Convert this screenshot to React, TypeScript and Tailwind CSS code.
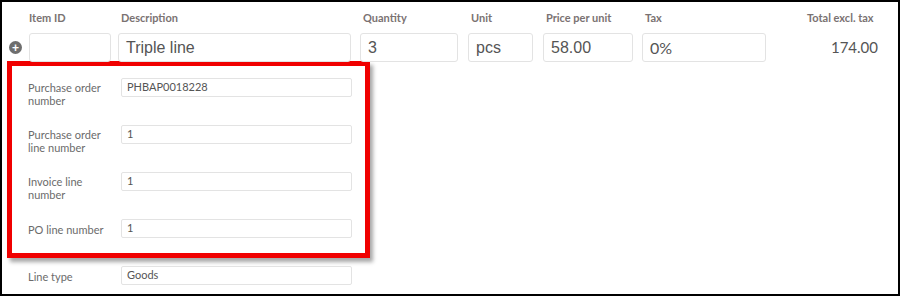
import React from "react"

const label = "text-[11px] leading-[13px] text-[#6b6b6b] font-['Lato','Carlito',sans-serif]"
const head = "text-[11px] font-bold text-[#7a7272] font-['Lato',sans-serif]"
const bigInput = "h-[29px] border border-[#e3e3e3] rounded-[3px] px-[7px] flex items-center text-[16px] text-[#555]"
const smallInput = "h-[19px] w-[231px] border border-[#e3e3e3] rounded-[2px] px-[5px] flex items-center text-[11px] text-[#555] font-['Lato',sans-serif]"

function Field({ name, value }: { name: React.ReactNode; value: string }) {
  return (
    <div className="flex items-start h-[47px]">
      <div className={`w-[93px] pt-[3px] ${label}`}>{name}</div>
      <div className={smallInput}>{value}</div>
    </div>
  )
}

export default function App() {
  return (
    <div className="w-[900px] h-[297px] bg-white">
      <div className="w-[900px] h-[296px] border-2 border-black relative">
        {/* column headers */}
        <div className={`flex h-[31px] pt-[8px] ${head}`}>
          <div className="ml-[27px] w-[92px]">Item ID</div>
          <div className="w-[242px]">Description</div>
          <div className="w-[108px]">Quantity</div>
          <div className="w-[75px]">Unit</div>
          <div className="w-[99px]">Price per unit</div>
          <div className="w-[100px]">Tax</div>
          <div className="ml-[62px]">Total excl. tax</div>
        </div>

        {/* main row */}
        <div className="flex items-center font-['Liberation_Sans',Arial,sans-serif]">
          <div className="ml-[7px] w-[13px] h-[13px] rounded-full bg-[#6e6e6e] flex items-center justify-center text-white text-[12px] font-bold leading-none">
            +
          </div>
          <div className={`ml-[7px] w-[82px] ${bigInput}`}></div>
          <div className={`ml-[7px] w-[233px] ${bigInput}`}>Triple line</div>
          <div className={`ml-[9px] w-[98px] ${bigInput}`}>3</div>
          <div className={`ml-[10px] w-[65px] ${bigInput}`}>pcs</div>
          <div className={`ml-[10px] w-[90px] ${bigInput}`}>58.00</div>
          <div className={`ml-[9px] w-[124px] ${bigInput} font-['Lato',sans-serif]`}>0%</div>
          <div className="ml-auto mr-[20px] text-[15px] text-[#555] font-['Lato',sans-serif]">174.00</div>
        </div>

        {/* red highlight box */}
        <div className="mt-[-1px] ml-[5px] w-[363px] h-[197px] border-[5px] border-[#f00000] shadow-[3px_4px_4px_rgba(0,0,0,0.35)] pl-[16px] pt-[12px]">
          <Field name={<>Purchase order<br />number</>} value="PHBAP0018228" />
          <Field name={<>Purchase order<br />line number</>} value="1" />
          <Field name={<>Invoice line<br />number</>} value="1" />
          <div className="flex items-start">
            <div className={`w-[93px] pt-[4px] ${label}`}>PO line number</div>
            <div className={smallInput}>1</div>
          </div>
        </div>

        <div className="flex items-start ml-[26px] mt-[8px]">
          <div className={`w-[93px] pt-[4px] ${label}`}>Line type</div>
          <div className={smallInput}>Goods</div>
        </div>
      </div>
    </div>
  )
}
